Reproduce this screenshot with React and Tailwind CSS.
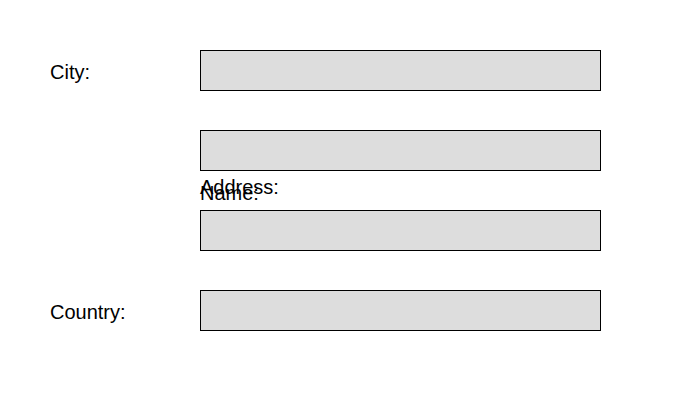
import React from 'react';

function Field({ label }) {
  return (
    <div className="flex items-center">
      <div className="w-[150px] pt-[4px] text-[20px] leading-[23px]">{label}</div>
      <div className="w-[401px] h-[41px] bg-[#dddddd] border border-black" />
    </div>
  );
}

export default function App() {
  return (
    <div className="w-[700px] h-[400px] bg-white text-black font-['Liberation_Sans',Arial,sans-serif]">
      <div className="pt-[50px] pl-[50px] flex flex-col">
        <Field label="City:" />
        <div className="mt-[39px] flex items-center">
          <div className="w-[150px]" />
          <div className="w-[401px] h-[41px] bg-[#dddddd] border border-black" />
        </div>
        {/* labels that spill over between the second and third fields */}
        <div className="relative ml-[150px] h-0">
          <div className="absolute top-[5px] left-0 text-[20px] leading-[23px]">Address:</div>
          <div className="absolute top-[11px] left-0 text-[20px] leading-[23px]">Name:</div>
        </div>
        <div className="mt-[39px] flex items-center">
          <div className="w-[150px]" />
          <div className="w-[401px] h-[41px] bg-[#dddddd] border border-black" />
        </div>
        <div className="mt-[39px]">
          <Field label="Country:" />
        </div>
      </div>
    </div>
  );
}
